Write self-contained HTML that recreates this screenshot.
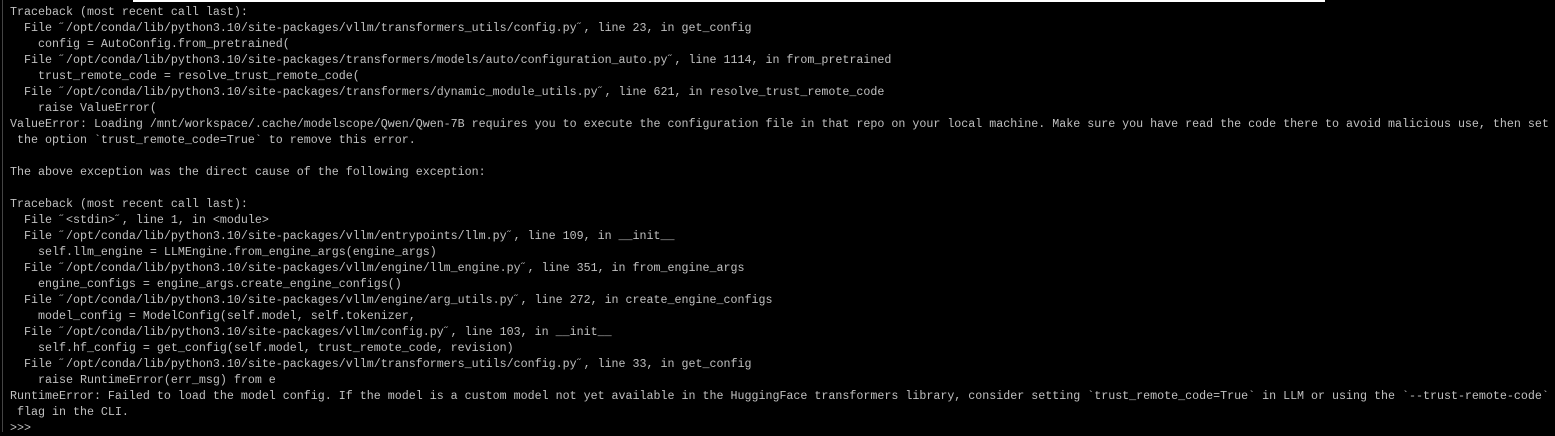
<!DOCTYPE html>
<html><head><meta charset="utf-8"><style>
html,body{margin:0;padding:0;background:#000;width:1555px;height:432px;overflow:hidden}
.bar{position:absolute;left:133px;top:0;width:1192px;height:2px;background:#fff}
.edge{position:absolute;left:2px;top:0;width:1px;height:432px;background:#444}
pre{position:absolute;left:10px;top:3.5px;margin:0;font-family:"Liberation Mono","Noto Sans CJK SC",monospace;font-size:11.67px;line-height:16px;color:#c0c0c0;white-space:pre}
</style></head><body>
<div class="bar"></div><div class="edge"></div>
<pre>Traceback (most recent call last):
  File ˝/opt/conda/lib/python3.10/site-packages/vllm/transformers_utils/config.py˝, line 23, in get_config
    config = AutoConfig.from_pretrained(
  File ˝/opt/conda/lib/python3.10/site-packages/transformers/models/auto/configuration_auto.py˝, line 1114, in from_pretrained
    trust_remote_code = resolve_trust_remote_code(
  File ˝/opt/conda/lib/python3.10/site-packages/transformers/dynamic_module_utils.py˝, line 621, in resolve_trust_remote_code
    raise ValueError(
ValueError: Loading /mnt/workspace/.cache/modelscope/Qwen/Qwen-7B requires you to execute the configuration file in that repo on your local machine. Make sure you have read the code there to avoid malicious use, then set
 the option `trust_remote_code=True` to remove this error.

The above exception was the direct cause of the following exception:

Traceback (most recent call last):
  File ˝&lt;stdin&gt;˝, line 1, in &lt;module&gt;
  File ˝/opt/conda/lib/python3.10/site-packages/vllm/entrypoints/llm.py˝, line 109, in __init__
    self.llm_engine = LLMEngine.from_engine_args(engine_args)
  File ˝/opt/conda/lib/python3.10/site-packages/vllm/engine/llm_engine.py˝, line 351, in from_engine_args
    engine_configs = engine_args.create_engine_configs()
  File ˝/opt/conda/lib/python3.10/site-packages/vllm/engine/arg_utils.py˝, line 272, in create_engine_configs
    model_config = ModelConfig(self.model, self.tokenizer,
  File ˝/opt/conda/lib/python3.10/site-packages/vllm/config.py˝, line 103, in __init__
    self.hf_config = get_config(self.model, trust_remote_code, revision)
  File ˝/opt/conda/lib/python3.10/site-packages/vllm/transformers_utils/config.py˝, line 33, in get_config
    raise RuntimeError(err_msg) from e
RuntimeError: Failed to load the model config. If the model is a custom model not yet available in the HuggingFace transformers library, consider setting `trust_remote_code=True` in LLM or using the `--trust-remote-code`
 flag in the CLI.
&gt;&gt;&gt;</pre>
</body></html>
